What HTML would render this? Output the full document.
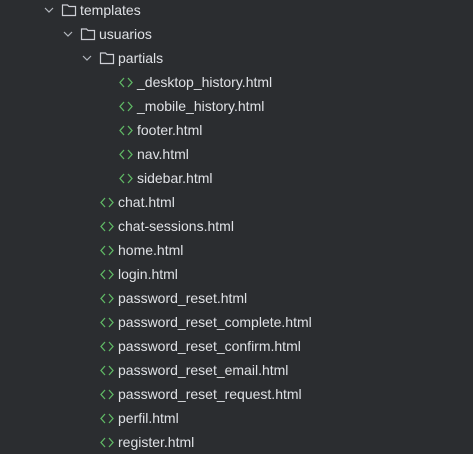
<!DOCTYPE html><html><head><style>
body{margin:0;background:#2b2d30;width:473px;height:452px;overflow:hidden;font-family:"Liberation Sans",sans-serif;font-size:14px;color:#dfe1e5}
.r{position:absolute;height:24px;line-height:24px;white-space:nowrap}
svg{position:absolute}
</style></head><body>
<div id="t"></div>
<script>
var rows=[
["d",0,"templates"],["d",1,"usuarios"],["d",2,"partials"],
["f",3,"_desktop_history.html"],["f",3,"_mobile_history.html"],["f",3,"footer.html"],["f",3,"nav.html"],["f",3,"sidebar.html"],
["f",2,"chat.html"],["f",2,"chat-sessions.html"],["f",2,"home.html"],["f",2,"login.html"],["f",2,"password_reset.html"],["f",2,"password_reset_complete.html"],["f",2,"password_reset_confirm.html"],["f",2,"password_reset_email.html"],["f",2,"password_reset_request.html"],["f",2,"perfil.html"],["f",2,"register.html"]];
var h="";
rows.forEach(function(r,i){
 var y=i*24-2, x=80+r[1]*19;
 if(r[0]=="d"){
  var cx=x-36;
  h+='<svg style="left:'+cx+'px;top:'+(y+8)+'px" width="10" height="8"><path d="M1 2 L5 6 L9 2" fill="none" stroke="#b4b8bf" stroke-width="1.2"/></svg>';
  h+='<svg style="left:'+(x-19)+'px;top:'+(y+5)+'px" width="16" height="14"><path d="M1.5 2 h5 l1.5 1.5 h6.5 v9 h-13 z" fill="none" stroke="#ced0d6" stroke-width="1.2"/></svg>';
  h+='<div class="r" style="left:'+x+'px;top:'+y+'px">'+r[2]+'</div>';
 }else{
  h+='<svg style="left:'+(x-18)+'px;top:'+(y+7)+'px" width="14" height="11"><path d="M5 1 L1 5.5 L5 10 M9 1 L13 5.5 L9 10" fill="none" stroke="#5fb865" stroke-width="1.3"/></svg>';
  h+='<div class="r" style="left:'+x+'px;top:'+y+'px">'+r[2]+'</div>';
 }
});
document.getElementById("t").innerHTML=h;
</script>
</body></html>
